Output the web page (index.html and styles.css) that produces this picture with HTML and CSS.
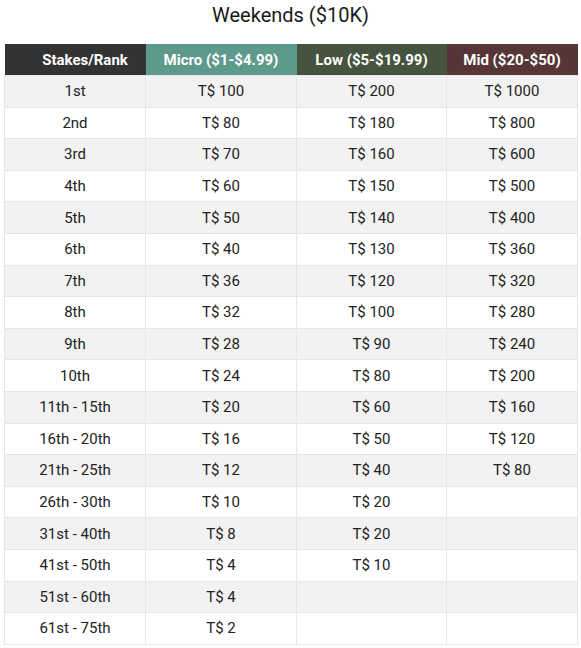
FILE: index.html
```html
<!DOCTYPE html>
<html>
<head>
<meta charset="utf-8">
<link rel="stylesheet" href="styles.css">
</head>
<body>
<div class="wrap">
<h2 class="title">Weekends ($10K)</h2>
<table class="prizes">
<colgroup><col class="c1"><col class="c2"><col class="c3"><col class="c4"></colgroup>
<thead>
<tr><th class="h-rank">Stakes/Rank</th><th class="h-micro">Micro ($1-$4.99)</th><th class="h-low">Low ($5-$19.99)</th><th class="h-mid">Mid ($20-$50)</th></tr>
</thead>
<tbody>
<tr><td>1st</td><td>T$ 100</td><td>T$ 200</td><td>T$ 1000</td></tr>
<tr><td>2nd</td><td>T$ 80</td><td>T$ 180</td><td>T$ 800</td></tr>
<tr><td>3rd</td><td>T$ 70</td><td>T$ 160</td><td>T$ 600</td></tr>
<tr><td>4th</td><td>T$ 60</td><td>T$ 150</td><td>T$ 500</td></tr>
<tr><td>5th</td><td>T$ 50</td><td>T$ 140</td><td>T$ 400</td></tr>
<tr><td>6th</td><td>T$ 40</td><td>T$ 130</td><td>T$ 360</td></tr>
<tr><td>7th</td><td>T$ 36</td><td>T$ 120</td><td>T$ 320</td></tr>
<tr><td>8th</td><td>T$ 32</td><td>T$ 100</td><td>T$ 280</td></tr>
<tr><td>9th</td><td>T$ 28</td><td>T$ 90</td><td>T$ 240</td></tr>
<tr><td>10th</td><td>T$ 24</td><td>T$ 80</td><td>T$ 200</td></tr>
<tr><td>11th - 15th</td><td>T$ 20</td><td>T$ 60</td><td>T$ 160</td></tr>
<tr><td>16th - 20th</td><td>T$ 16</td><td>T$ 50</td><td>T$ 120</td></tr>
<tr><td>21th - 25th</td><td>T$ 12</td><td>T$ 40</td><td>T$ 80</td></tr>
<tr><td>26th - 30th</td><td>T$ 10</td><td>T$ 20</td><td></td></tr>
<tr><td>31st - 40th</td><td>T$ 8</td><td>T$ 20</td><td></td></tr>
<tr><td>41st - 50th</td><td>T$ 4</td><td>T$ 10</td><td></td></tr>
<tr><td>51st - 60th</td><td>T$ 4</td><td></td><td></td></tr>
<tr><td>61st - 75th</td><td>T$ 2</td><td></td><td></td></tr>
</tbody>
</table>
</div>
</body>
</html>
```
FILE: styles.css
```css
html, body { margin: 0; padding: 0; background: #fff; }
body { font-family: Roboto, "Liberation Sans", sans-serif; color: #222; }
.wrap { padding: 0 4px; }
.title {
  margin: 0;
  height: 44px;
  padding-top: 3px;
  box-sizing: border-box;
  text-align: center;
  font-size: 20px;
  font-weight: 400;
  line-height: 24px;
  color: #1a1a1a;
}
.prizes {
  width: 573px;
  border-collapse: collapse;
  table-layout: fixed;
  font-size: 15px;
}
.c1 { width: 141px; }
.c2 { width: 151px; }
.c3 { width: 150px; }
.c4 { width: 131px; }
.prizes th {
  height: 31px;
  padding: 0;
  color: #fff;
  font-size: 15px;
  line-height: 18px;
  font-weight: 700;
  text-align: center;
  border: none;
}
.h-rank { background: #333333; padding-left: 20px !important; }
.h-micro { background: #5e9a8b; }
.h-low { background: #46533f; }
.h-mid { background: #553535; }
.prizes td {
  height: 30.6px;
  padding: 0;
  text-align: center;
  border: 1px solid #e6e6e6;
  line-height: 18px;
}
.prizes tbody tr:nth-child(odd) td { background: #f2f2f2; }
```
